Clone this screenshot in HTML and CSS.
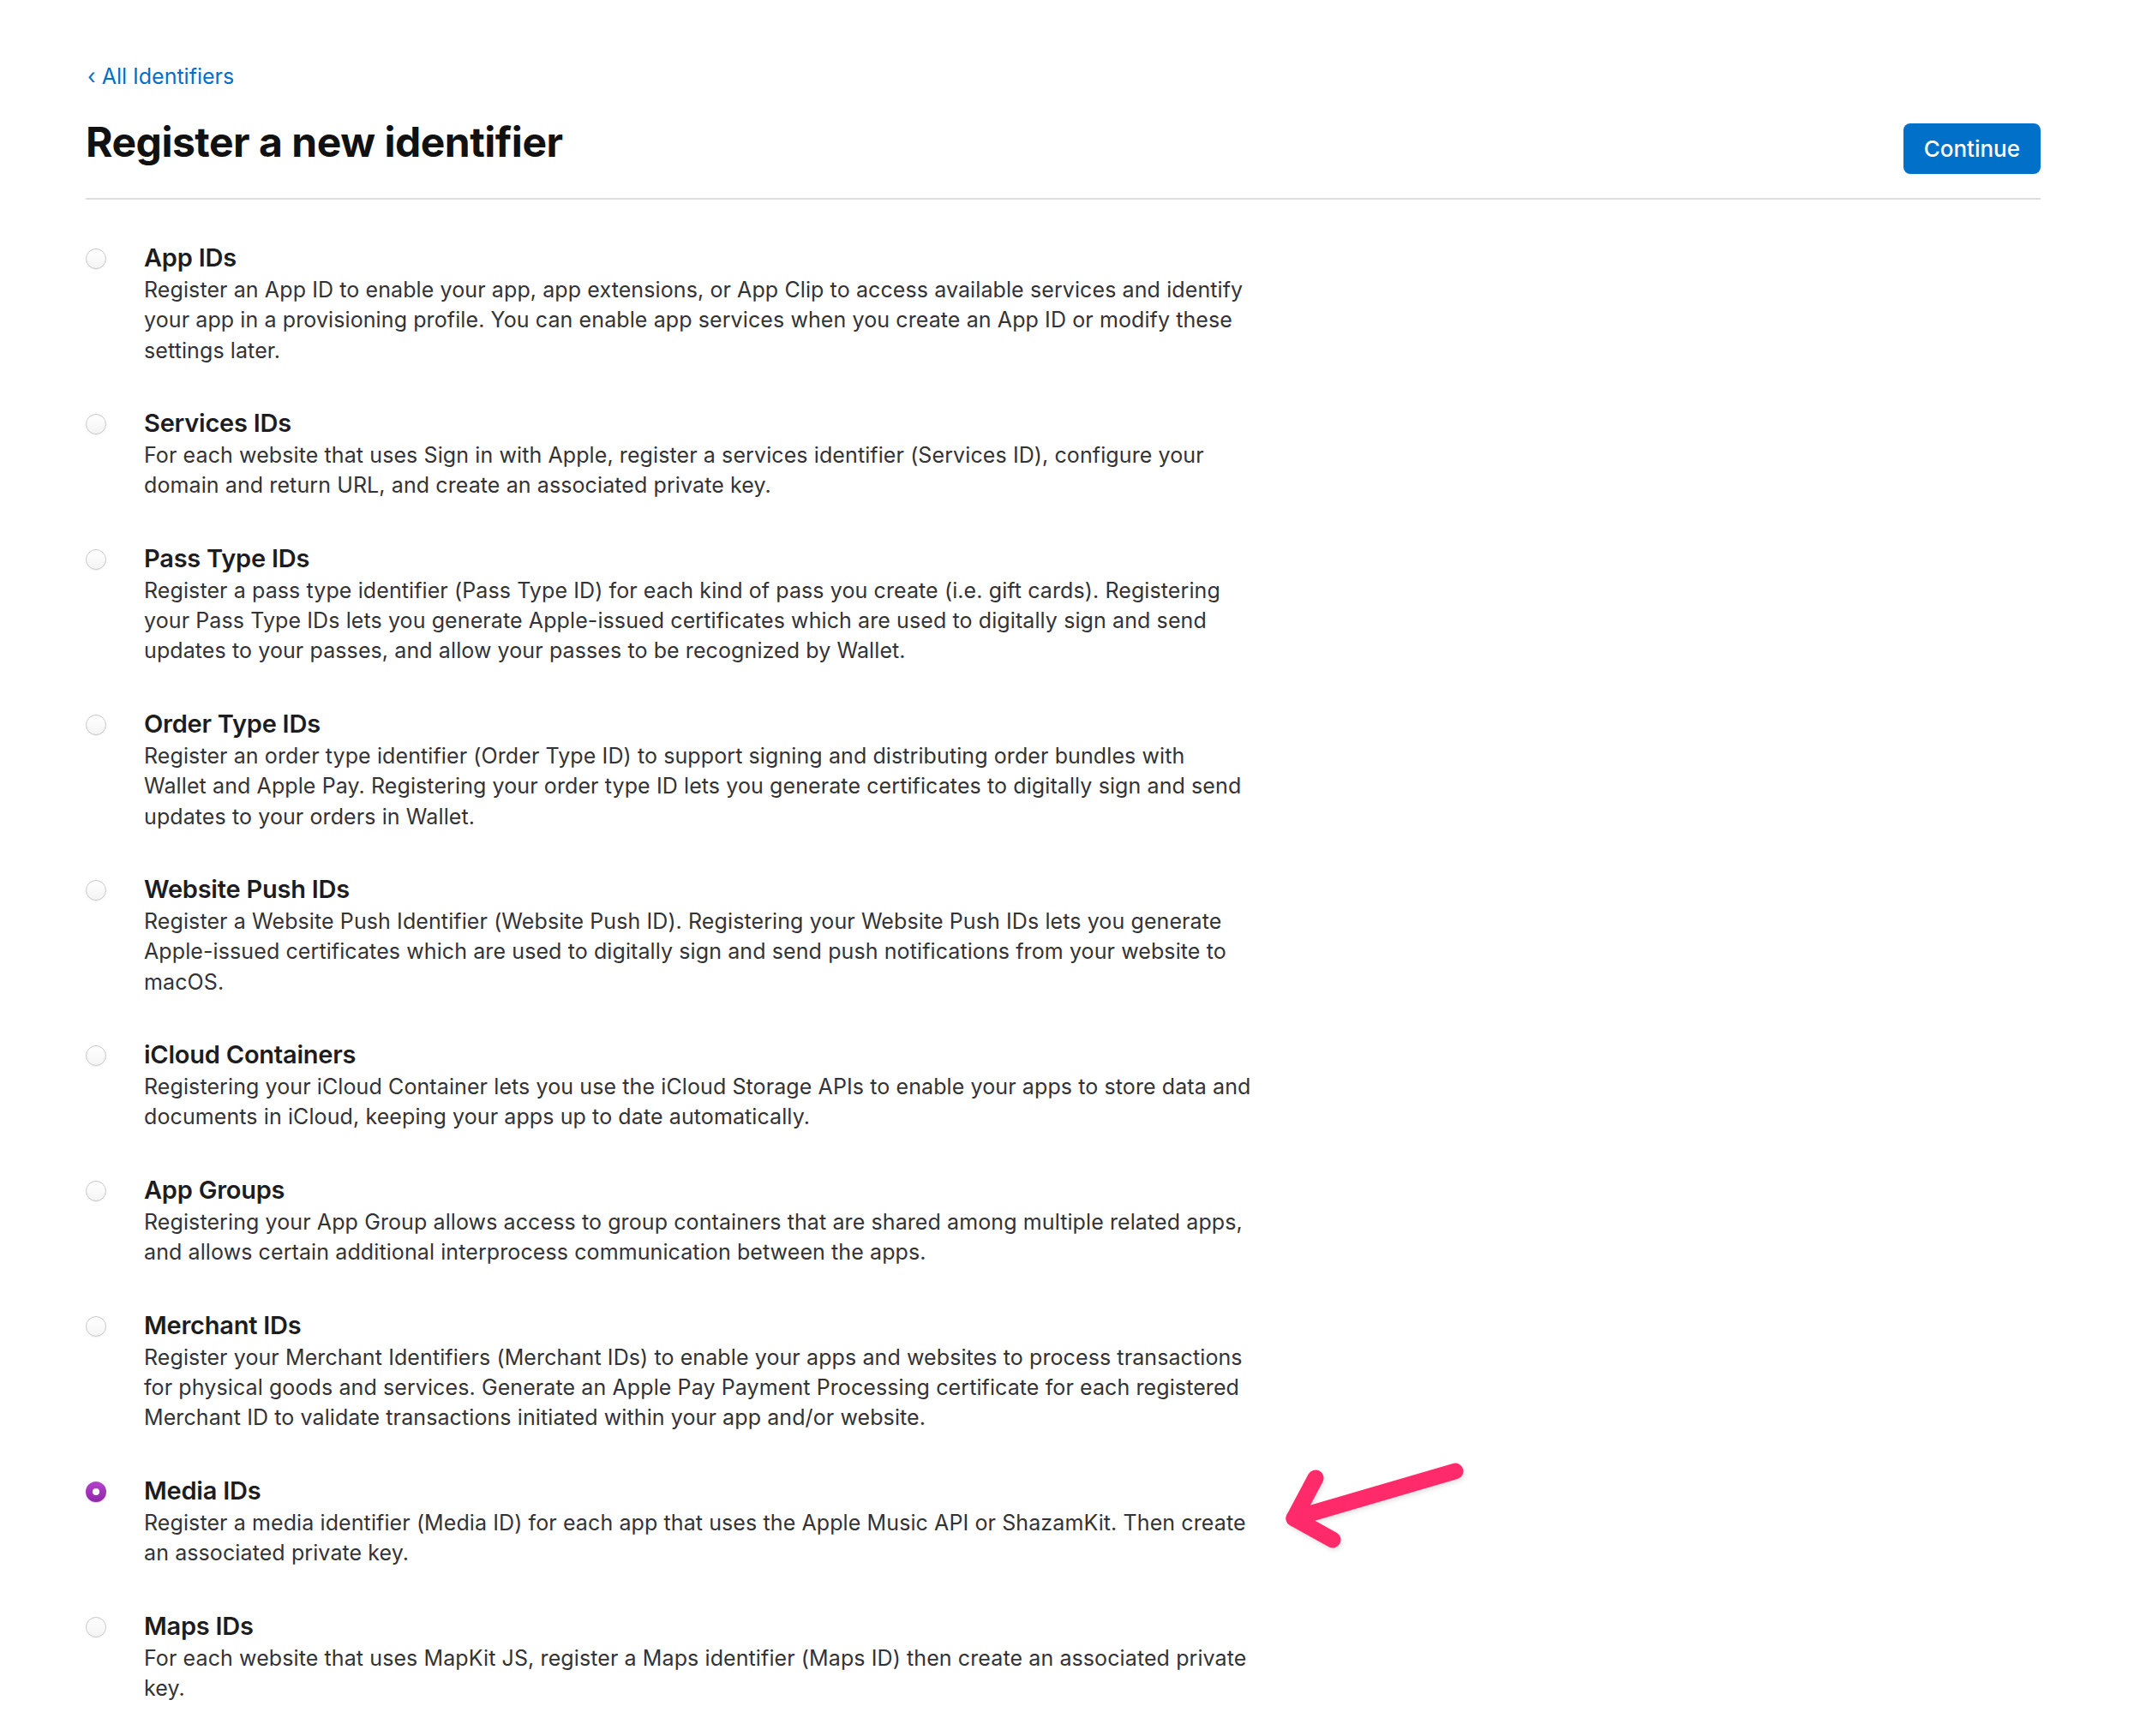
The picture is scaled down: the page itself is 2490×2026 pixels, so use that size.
FILE: index.html
```html
<!DOCTYPE html>
<html lang="en">
<head>
<meta charset="utf-8">
<title>Register a new identifier</title>
<link rel="stylesheet" href="styles.css">
</head>
<body>
<main class="page">
  <a class="back" href="#"><span class="chev">‹</span> All Identifiers</a>
  <header class="head">
    <h1 class="title">Register a new identifier</h1>
    <button class="btn" type="button">Continue</button>
  </header>

  <ul class="list">
    <li class="item">
      <span class="radio"></span>
      <div class="body">
        <h2 class="name">App IDs</h2>
        <p class="desc">Register an App ID to enable your app, app extensions, or App Clip to access available services and identify<br>your app in a provisioning profile. You can enable app services when you create an App ID or modify these<br>settings later.</p>
      </div>
    </li>
    <li class="item">
      <span class="radio"></span>
      <div class="body">
        <h2 class="name">Services IDs</h2>
        <p class="desc">For each website that uses Sign in with Apple, register a services identifier (Services ID), configure your<br>domain and return URL, and create an associated private key.</p>
      </div>
    </li>
    <li class="item">
      <span class="radio"></span>
      <div class="body">
        <h2 class="name">Pass Type IDs</h2>
        <p class="desc">Register a pass type identifier (Pass Type ID) for each kind of pass you create (i.e. gift cards). Registering<br>your Pass Type IDs lets you generate Apple-issued certificates which are used to digitally sign and send<br>updates to your passes, and allow your passes to be recognized by Wallet.</p>
      </div>
    </li>
    <li class="item">
      <span class="radio"></span>
      <div class="body">
        <h2 class="name">Order Type IDs</h2>
        <p class="desc">Register an order type identifier (Order Type ID) to support signing and distributing order bundles with<br>Wallet and Apple Pay. Registering your order type ID lets you generate certificates to digitally sign and send<br>updates to your orders in Wallet.</p>
      </div>
    </li>
    <li class="item">
      <span class="radio"></span>
      <div class="body">
        <h2 class="name">Website Push IDs</h2>
        <p class="desc">Register a Website Push Identifier (Website Push ID). Registering your Website Push IDs lets you generate<br>Apple-issued certificates which are used to digitally sign and send push notifications from your website to<br>macOS.</p>
      </div>
    </li>
    <li class="item">
      <span class="radio"></span>
      <div class="body">
        <h2 class="name">iCloud Containers</h2>
        <p class="desc">Registering your iCloud Container lets you use the iCloud Storage APIs to enable your apps to store data and<br>documents in iCloud, keeping your apps up to date automatically.</p>
      </div>
    </li>
    <li class="item">
      <span class="radio"></span>
      <div class="body">
        <h2 class="name">App Groups</h2>
        <p class="desc">Registering your App Group allows access to group containers that are shared among multiple related apps,<br>and allows certain additional interprocess communication between the apps.</p>
      </div>
    </li>
    <li class="item">
      <span class="radio"></span>
      <div class="body">
        <h2 class="name">Merchant IDs</h2>
        <p class="desc">Register your Merchant Identifiers (Merchant IDs) to enable your apps and websites to process transactions<br>for physical goods and services. Generate an Apple Pay Payment Processing certificate for each registered<br>Merchant ID to validate transactions initiated within your app and/or website.</p>
      </div>
    </li>
    <li class="item">
      <span class="radio radio-on"></span>
      <div class="body">
        <h2 class="name">Media IDs</h2>
        <p class="desc">Register a media identifier (Media ID) for each app that uses the Apple Music API or ShazamKit. Then create<br>an associated private key.</p>
      </div>
    </li>
    <li class="item">
      <span class="radio"></span>
      <div class="body">
        <h2 class="name">Maps IDs</h2>
        <p class="desc">For each website that uses MapKit JS, register a Maps identifier (Maps ID) then create an associated private<br>key.</p>
      </div>
    </li>
  </ul>

  <svg class="arrow" width="240" height="130" viewBox="0 0 240 130" aria-hidden="true">
    <defs>
      <filter id="sh" x="-20%" y="-30%" width="140%" height="160%">
        <feDropShadow dx="1.5" dy="2.5" stdDeviation="2.5" flood-color="#000" flood-opacity="0.12"/>
      </filter>
    </defs>
    <g filter="url(#sh)" fill="none" stroke="#fe2c69" stroke-width="19" stroke-linecap="round" stroke-linejoin="round">
      <path d="M218 27 L30 82"/>
      <path d="M55 35 L30 82 L75 107"/>
    </g>
  </svg>
</main>
</body>
</html>
```

FILE: styles.css
```css
* { box-sizing: border-box; }

html, body {
  margin: 0;
  padding: 0;
  background: #ffffff;
}

body {
  font-family: Inter, "Noto Sans", "Liberation Sans", sans-serif;
  color: #1d1d1f;
}

.page {
  position: relative;
  padding: 74px 109px 80px 100px;
}

.back {
  display: block;
  width: max-content;
  font-size: 25px;
  line-height: 30px;
  color: #0070c9;
  text-decoration: none;
  letter-spacing: 0;
}

.chev {
  display: inline-block;
  margin-left: 2px;
}

.head {
  display: flex;
  justify-content: space-between;
  align-items: flex-start;
  margin-top: 33px;
  padding-bottom: 28px;
  border-bottom: 2px solid #dedede;
}

.title {
  margin: 0;
  font-size: 48px;
  line-height: 58px;
  font-weight: 700;
  color: #111111;
  letter-spacing: -0.01em;
}

.btn {
  margin-top: 7px;
  height: 59px;
  padding: 0 24px;
  border: 0;
  border-radius: 8px;
  background: #0070c9;
  color: #ffffff;
  font-family: inherit;
  font-size: 26px;
  font-weight: 500;
  letter-spacing: 0;
}

.list {
  list-style: none;
  margin: 47px 0 0;
  padding: 0;
  display: flex;
  flex-direction: column;
  gap: 46.2px;
}

.item {
  display: flex;
  align-items: flex-start;
  gap: 44px;
}

.radio {
  flex: none;
  width: 24px;
  height: 24px;
  margin-top: 10px;
  border-radius: 50%;
  border: 1px solid #c9c9c9;
  background: linear-gradient(#ffffff, #f4f4f4);
  box-shadow: 0 1px 1px rgba(0, 0, 0, 0.06);
}

.radio-on {
  position: relative;
  border: 0;
  background: linear-gradient(#b443cc, #8f27a9);
  box-shadow: 0 1px 1px rgba(120, 20, 140, 0.2);
}

.radio-on::after {
  content: "";
  position: absolute;
  left: 8px;
  top: 8px;
  width: 8px;
  height: 8px;
  border-radius: 50%;
  background: #ffffff;
}

.body {
  min-width: 0;
}

.name {
  margin: 0;
  font-size: 29px;
  line-height: 41px;
  font-weight: 600;
  color: #1d1d1f;
  letter-spacing: -0.008em;
}

.desc {
  margin: 0;
  font-size: 25px;
  line-height: 35.3px;
  color: #333336;
  white-space: nowrap;
  letter-spacing: 0.004em;
}

.arrow {
  position: absolute;
  left: 1480px;
  top: 1690px;
  overflow: visible;
}
```
